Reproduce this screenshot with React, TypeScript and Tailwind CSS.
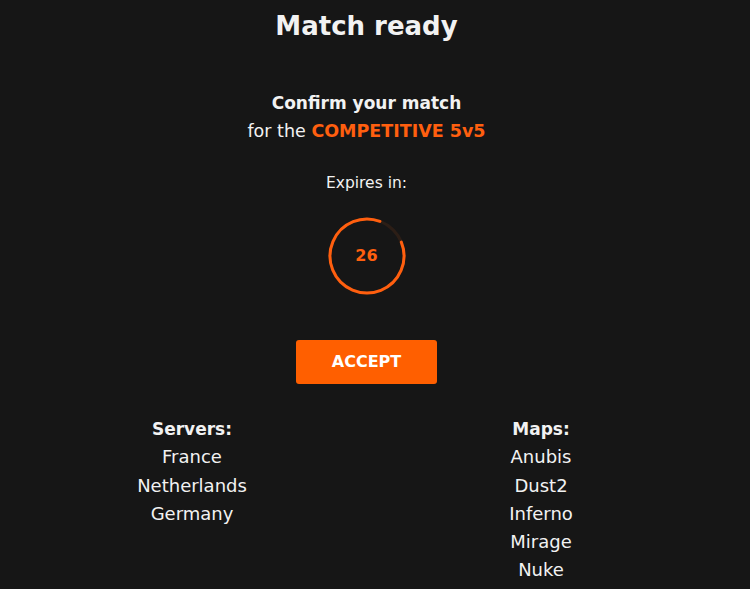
import React from "react";

const ORANGE = "#ff5f0f";

function Countdown({ seconds, total }: { seconds: number; total: number }) {
  const r = 37;
  const c = 2 * Math.PI * r;
  const left = seconds / total;
  return (
    <div className="relative w-[80px] h-[80px]">
      <svg width="80" height="80" viewBox="0 0 80 80" className="absolute inset-0">
        <circle cx="40" cy="40" r={r} fill="none" stroke="#2c1e16" strokeWidth="3" />
        <circle
          cx="40"
          cy="40"
          r={r}
          fill="none"
          stroke={ORANGE}
          strokeWidth="3"
          strokeLinecap="round"
          strokeDasharray={`${c * left} ${c}`}
          transform="rotate(-22 40 40)"
        />
      </svg>
      <div className="absolute inset-0 flex items-center justify-center text-[16px] font-bold text-[#ff5f0f]">
        {seconds}
      </div>
    </div>
  );
}

export default function App() {
  const servers = ["France", "Netherlands", "Germany"];
  const maps = ["Anubis", "Dust2", "Inferno", "Mirage", "Nuke"];
  return (
    <div
      className="w-[750px] h-[589px] overflow-hidden bg-[#161616] text-[#f2f2f2]"
      style={{ fontFamily: "'DejaVu Sans', sans-serif" }}
    >
      <div className="w-[733px] flex flex-col items-center">
        <h1 className="mt-[7px] text-[26px] leading-[38px] font-bold">Match ready</h1>
        <div className="mt-[44px] flex flex-col items-center leading-[28px]">
          <div className="text-[17px] font-bold">Confirm your match</div>
          <div className="text-[17.5px]">
            for the <span className="font-bold text-[#ff5f0f]">COMPETITIVE 5v5</span>
          </div>
        </div>
        <div className="mt-[28px] text-[15.5px] leading-[20px]">Expires in:</div>
        <div className="mt-[23px]">
          <Countdown seconds={26} total={30} />
        </div>
        <button className="mt-[44px] w-[141px] h-[44px] rounded-[3px] bg-[#ff5f00] text-[16px] font-bold text-white">
          ACCEPT
        </button>
        <div className="mt-[31px] flex justify-center gap-[149px] text-[18px] leading-[28.25px]">
          <div className="w-[200px] flex flex-col items-center">
            <div className="text-[17px] font-bold">Servers:</div>
            {servers.map((s) => (
              <div key={s}>{s}</div>
            ))}
          </div>
          <div className="w-[200px] flex flex-col items-center">
            <div className="text-[17px] font-bold">Maps:</div>
            {maps.map((m) => (
              <div key={m}>{m}</div>
            ))}
          </div>
        </div>
      </div>
    </div>
  );
}
